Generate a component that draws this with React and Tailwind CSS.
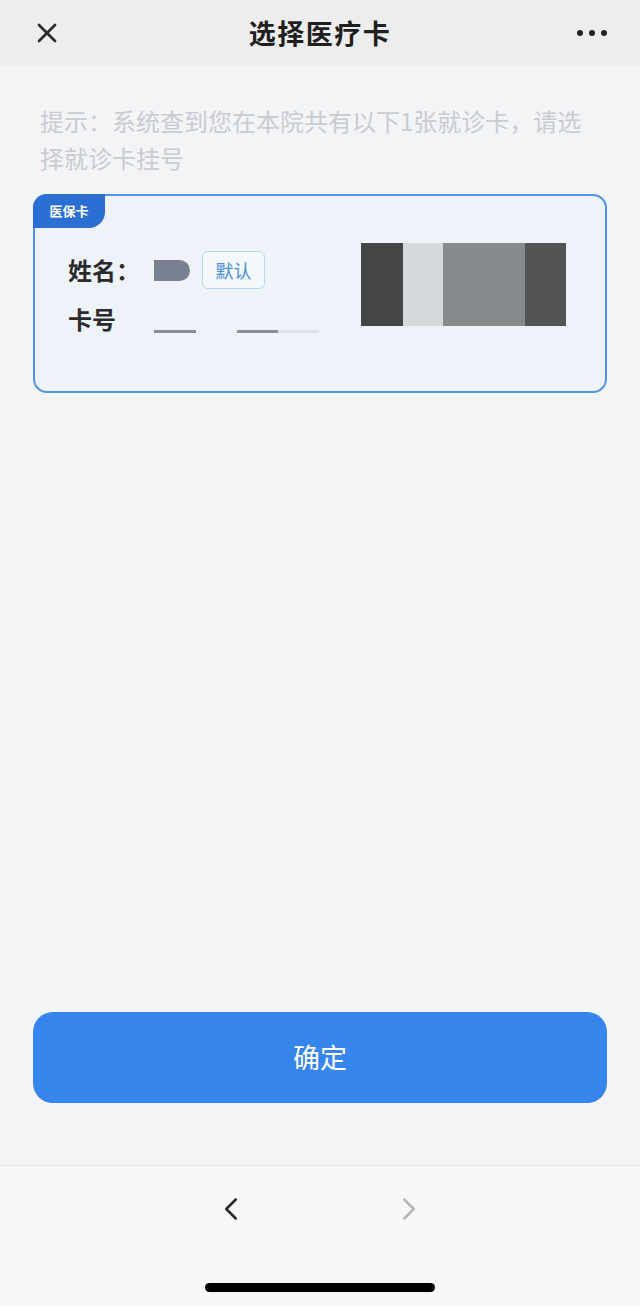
import { X, ChevronLeft, ChevronRight } from 'lucide-react';

const font = { fontFamily: '"Noto Sans CJK SC", "Noto Sans", sans-serif' };

export default function App() {
  return (
    <div className="h-[1306px] w-[640px] flex flex-col bg-[#f3f4f6]" style={font}>
      {/* 顶部导航 */}
      <div className="h-[66px] bg-[#ededed] flex items-center justify-between pl-[31px] pr-[31px] shrink-0">
        <X size={32} strokeWidth={2} className="text-[#2a2a2a]" />
        <div className="text-[27px] font-bold text-[#1f1f1f] tracking-[1.5px]">选择医疗卡</div>
        <div className="flex items-center gap-[6px] w-[32px]">
          <span className="h-[6px] w-[6px] rounded-full bg-[#222]"></span>
          <span className="h-[6px] w-[6px] rounded-full bg-[#222]"></span>
          <span className="h-[6px] w-[6px] rounded-full bg-[#222]"></span>
        </div>
      </div>

      {/* 内容 */}
      <div className="flex-1 px-[33px]">
        <p className="px-[7px] pt-[36px] text-[24px] leading-[37px] text-[#c8cbd0]">
          提示：系统查到您在本院共有以下1张就诊卡，请选择就诊卡挂号
        </p>

        <div className="relative mt-[18px] h-[199px] rounded-[14px] border-2 border-[#4d94ea] bg-[#edf3f9] flex items-start">
          <div className="absolute -left-[2px] -top-[2px] h-[34px] w-[72px] rounded-tl-[14px] rounded-br-[16px] bg-[#2b6fd3] text-white text-[13px] font-semibold flex items-center justify-center">
            医保卡
          </div>

          <div className="flex-1 pl-[33px] pt-[55px] flex flex-col gap-[12px]">
            <div className="flex items-center h-[38px]">
              <span className="w-[86px] text-[24px] font-bold text-[#2b2b2b]">姓名：</span>
              <span className="w-[36px] h-[21px] rounded-l-[4px] rounded-r-full bg-[#7b8090]"></span>
              <span className="ml-[12px] h-[38px] w-[63px] rounded-[6px] border-[1.5px] border-[#b8d4ee] bg-[#f3f8fd] text-[18px] text-[#4a8ed4] flex items-center justify-center">
                默认
              </span>
            </div>
            <div className="flex items-end h-[36px]">
              <span className="w-[86px] text-[24px] font-bold text-[#2b2b2b] self-center">卡号</span>
              <div className="flex items-center mb-[4px]">
                <span className="w-[42px] h-[3px] bg-[#8a8f96]"></span>
                <span className="ml-[41px] w-[41px] h-[3px] bg-[#8a8f96]"></span>
                <span className="w-[41px] h-[3px] bg-[#dfe3e8]"></span>
              </div>
            </div>
          </div>

          <div className="mt-[47px] mr-[39px] flex h-[83px] w-[205px]">
            <div className="w-[42px] bg-[#444546]"></div>
            <div className="w-[40px] bg-[#d5d8dc]"></div>
            <div className="w-[82px] bg-[#888b8e]"></div>
            <div className="w-[41px] bg-[#525456]"></div>
          </div>
        </div>
      </div>

      {/* 确定按钮 */}
      <div className="px-[33px] pb-[62px] shrink-0">
        <button className="w-full h-[91px] rounded-[20px] bg-[#3585ec] text-white text-[27px]">
          确定
        </button>
      </div>

      {/* 底部浏览栏 */}
      <div className="h-[141px] shrink-0 border-t border-[#e4e4e4] bg-[#f7f7f7] flex flex-col items-center">
        <div className="flex items-center gap-[140px] mt-[24px]">
          <ChevronLeft size={38} strokeWidth={1.6} className="text-[#2a2a2a]" />
          <ChevronRight size={38} strokeWidth={1.6} className="text-[#b5b5b5]" />
        </div>
        <div className="mt-[55px] h-[9px] w-[230px] rounded-full bg-black"></div>
      </div>
    </div>
  );
}
